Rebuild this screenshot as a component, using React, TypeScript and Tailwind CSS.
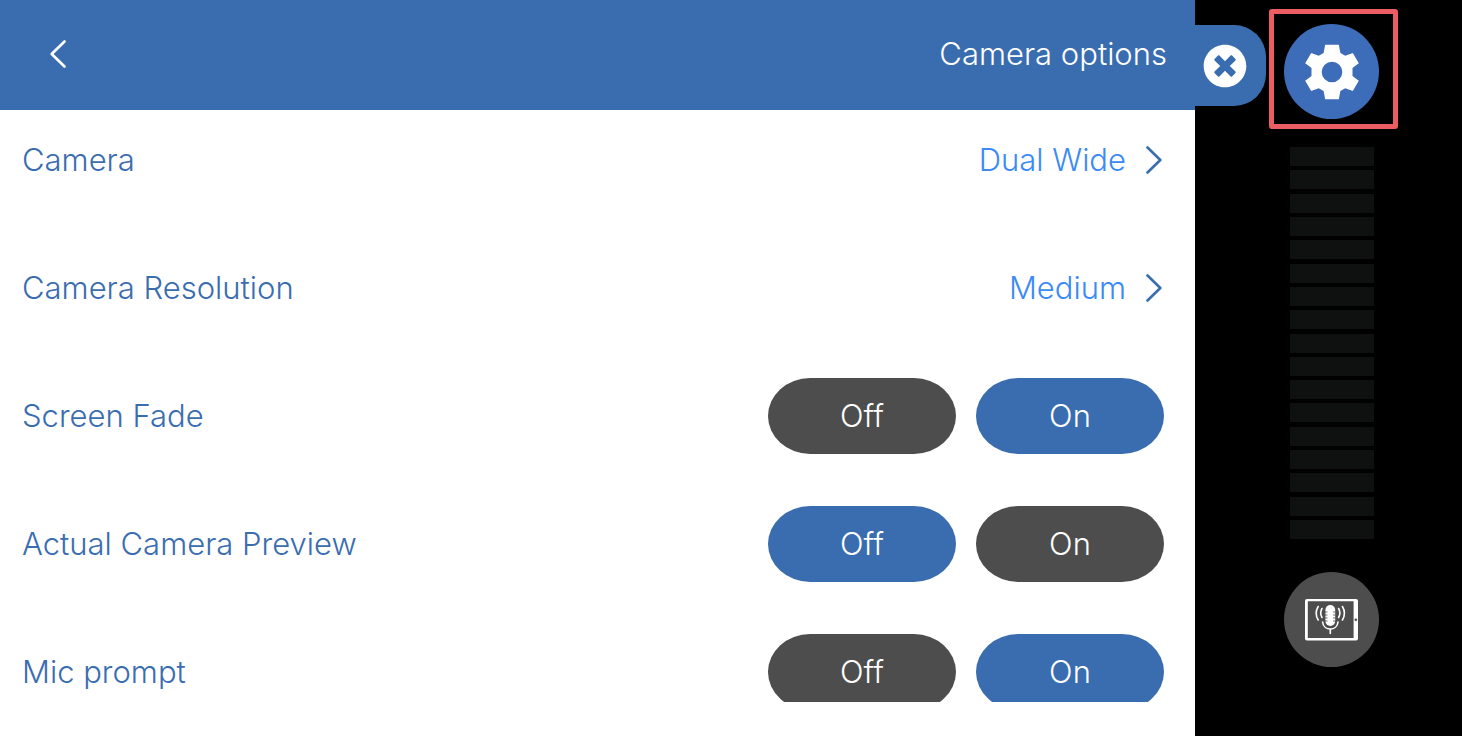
import { useState } from "react";
import { FaTimesCircle } from "react-icons/fa";

const linkRows = [
  { label: "Camera", value: "Dual Wide" },
  { label: "Camera Resolution", value: "Medium" },
];

const toggleRows = [
  { id: "fade", label: "Screen Fade", initial: true },
  { id: "preview", label: "Actual Camera Preview", initial: false },
  { id: "prompt", label: "Mic prompt", initial: true },
];

const LEVEL_BARS = 17;

function Chevron({ flip = false }: { flip?: boolean }) {
  return (
    <svg
      viewBox="0 0 16 28"
      className={`h-7 w-4 ${flip ? "rotate-180" : ""}`}
      fill="none"
      stroke="currentColor"
      strokeWidth="2.6"
      strokeLinecap="round"
      strokeLinejoin="round"
      aria-hidden="true"
    >
      <path d="M1.5 1.5 14.3 14 1.5 26.5" />
    </svg>
  );
}

function GearIcon() {
  return (
    <svg viewBox="-28 -28 56 56" className="size-14" aria-hidden="true">
      <path
        fill="white"
        fillRule="evenodd"
        d="M-6.8-27.2H6.8L8.4-19 13.3-16.2 20.8-19 26.8-8.8 20.5-4V4L26.8 8.8 20.8 19 13.3 16.2 8.4 19 6.8 27.2H-6.8L-8.4 19-13.3 16.2-20.8 19-26.8 8.8-20.5 4V-4L-26.8-8.8-20.8-19-13.3-16.2-8.4-19ZM0-10.3A10.3 10.3 0 1 0 0 10.3 10.3 10.3 0 1 0 0-10.3Z"
      />
    </svg>
  );
}

function TabletMicIcon() {
  return (
    <svg viewBox="0 0 54 42" className="h-[42px] w-[54px]" fill="none" aria-hidden="true">
      <path
        fill="white"
        fillRule="evenodd"
        d="M2 0H51A2 2 0 0 1 53 2V39.5A2 2 0 0 1 51 41.5H2A2 2 0 0 1 0 39.5V2A2 2 0 0 1 2 0ZM2.8 2.3V39H48.6V2.3Z"
      />
      <circle cx="50.8" cy="20.8" r="1.3" fill="#4d4d4d" />
      <rect x="20.4" y="6" width="9.8" height="21" rx="4.9" fill="white" />
      <path
        stroke="#4d4d4d"
        strokeWidth="0.8"
        d="M20 13h2.5M20 16h2.5M20 19h2.5M20 22h2.5M28 13h2.5M28 16h2.5M28 19h2.5M28 22h2.5"
      />
      <g stroke="white" strokeWidth="1.6" strokeLinecap="round">
        <path d="M17.6 23C18 27.5 21.5 30 25.3 30S32.6 27.5 33 23M25.3 30V34.5" />
        <path d="M17 9.5a9 9 0 0 0 0 9M33.6 9.5a9 9 0 0 1 0 9M13.2 7.5a13 13 0 0 0 0 13.5M37.4 7.5a13 13 0 0 1 0 13.5" />
      </g>
    </svg>
  );
}

function ToggleButton({
  active,
  label,
  onClick,
}: {
  active: boolean;
  label: string;
  onClick: () => void;
}) {
  return (
    <button
      type="button"
      aria-pressed={active}
      onClick={onClick}
      className={`h-[76px] w-[188px] rounded-[42px/38px] text-white ${
        active ? "bg-[#3a6db0]" : "bg-[#4d4d4d]"
      }`}
    >
      {label}
    </button>
  );
}

function ToggleRow({ label, initial }: { label: string; initial: boolean }) {
  const [on, setOn] = useState(initial);

  return (
    <div role="group" aria-label={label} className="flex h-[76px] shrink-0 items-center justify-between">
      <span>{label}</span>
      <div className="flex gap-5">
        <ToggleButton label="Off" active={!on} onClick={() => setOn(false)} />
        <ToggleButton label="On" active={on} onClick={() => setOn(true)} />
      </div>
    </div>
  );
}

export default function App() {
  return (
    <div className="flex h-screen bg-black font-['Inter',sans-serif] text-[31px] leading-10 font-[350]">
      <main className="flex min-w-0 flex-1 flex-col bg-white pb-[34px]">
        <header className="flex h-[110px] shrink-0 items-center justify-between bg-[#3a6db0] pr-7 pb-0.5 pl-[50px] text-white">
          <button type="button" aria-label="Back">
            <Chevron flip />
          </button>
          <h1>Camera options</h1>
        </header>

        <div className="flex min-h-0 flex-1 flex-col gap-[52px] overflow-hidden pt-3 pr-[31px] pl-[22px] text-[#3a6db0]">
          {linkRows.map((row) => (
            <button
              key={row.label}
              type="button"
              className="flex h-[76px] shrink-0 items-center justify-between pr-0.5"
            >
              <span>{row.label}</span>
              <span className="flex items-center gap-5 text-[#3b8af5]">
                {row.value}
                <span className="text-[#3a6db0]">
                  <Chevron />
                </span>
              </span>
            </button>
          ))}
          {toggleRows.map((row) => (
            <ToggleRow key={row.id} label={row.label} initial={row.initial} />
          ))}
        </div>
      </main>

      <aside className="flex w-[267px] shrink-0 items-start gap-[3px]">
        <button
          type="button"
          aria-label="Close"
          className="mt-[25px] flex h-[81px] w-[71px] items-center rounded-r-[32px] bg-[#3a6db0] pl-2 text-white"
        >
          <FaTimesCircle className="size-[44px]" />
        </button>

        <div className="mt-[9px] flex flex-col">
          <div className="h-[120px] w-[129px] rounded-[3px] border-5 border-[#eb5d62] pt-[10px] pl-[10px]">
            <button
              type="button"
              aria-label="Settings"
              className="flex size-[95px] items-center justify-center rounded-full bg-[#3d6db8]"
            >
              <GearIcon />
            </button>
          </div>

          {/* Input level */}
          <div className="mt-[18px] ml-[21px] flex h-[392px] w-[84px] flex-col justify-between">
            {Array.from({ length: LEVEL_BARS }, (_, i) => (
              <div key={i} className="h-[19px] bg-[#0f1010]" />
            ))}
          </div>

          <button
            type="button"
            aria-label="Microphone"
            className="mt-[33px] ml-[15px] flex size-[95px] items-center justify-center rounded-full bg-[#4d4d4d]"
          >
            <TabletMicIcon />
          </button>
        </div>
      </aside>
    </div>
  );
}
